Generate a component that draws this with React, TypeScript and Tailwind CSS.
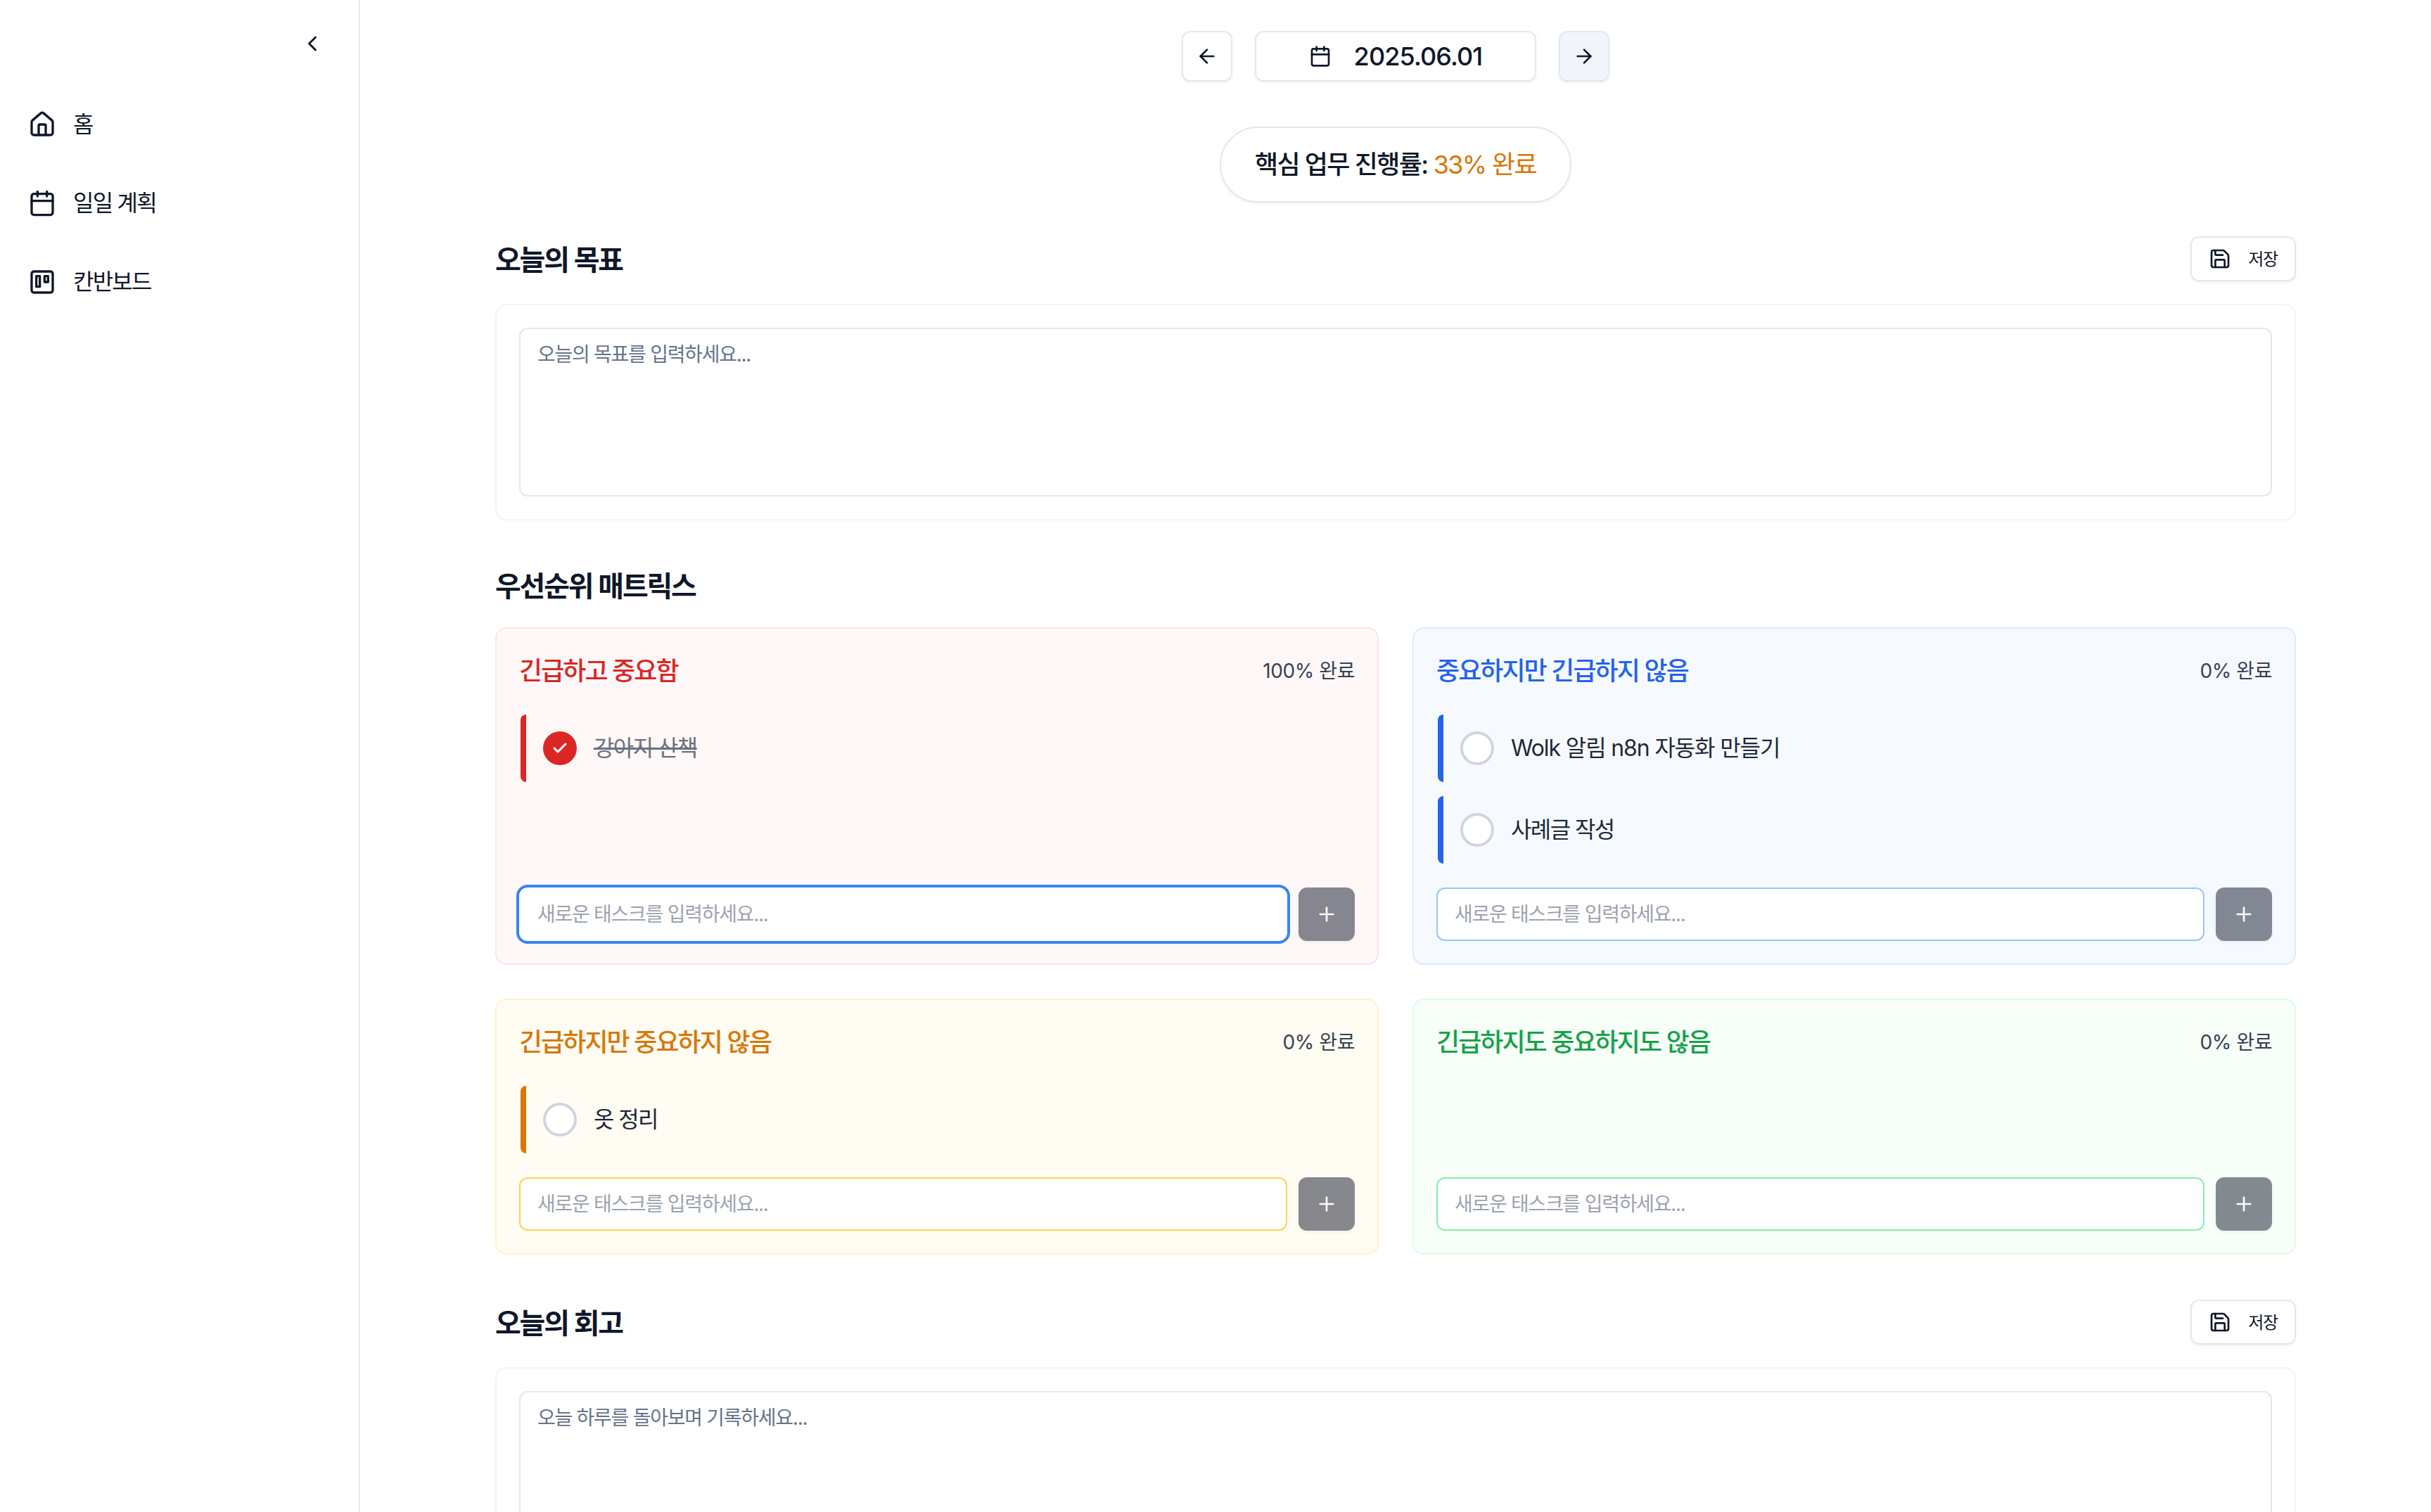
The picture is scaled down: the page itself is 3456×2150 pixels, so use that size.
import React from "react";
import { ArrowLeft, ArrowRight, Calendar, Check, ChevronLeft, House, Plus, Save } from "lucide-react";

function KanbanIcon({ className }: { className?: string }) {
  return (
    <svg viewBox="0 0 24 24" fill="none" stroke="currentColor" strokeWidth={2} strokeLinecap="round" strokeLinejoin="round" className={className}>
      <rect x="3" y="3" width="18" height="18" rx="2" />
      <rect x="7" y="7" width="3" height="9" />
      <rect x="14" y="7" width="3" height="5" />
    </svg>
  );
}

function SaveButton() {
  return (
    <button className="flex h-[64px] items-center gap-[24px] rounded-[12px] border-2 border-[#e2e8f0] bg-white px-[24px] text-[24px] tracking-[-0.05em] text-[#0f172a] shadow-[0_2px_4px_rgba(0,0,0,0.05)]">
      <Save className="h-[32px] w-[32px]" />
      <span className="pt-[2px]">저장</span>
    </button>
  );
}

function SectionHeader({ title, save }: { title: string; save?: boolean }) {
  return (
    <div className="mb-[32px] flex items-center justify-between">
      <h2 className="h-[56px] pt-[2px] text-[40px] leading-[56px] font-semibold tracking-[-0.055em] text-[#0f172a]">{title}</h2>
      {save && <SaveButton />}
    </div>
  );
}

function NoteCard({ placeholder }: { placeholder: string }) {
  return (
    <div className="rounded-[16px] border-2 border-[#f1f5f9] bg-white p-[32px] shadow-[0_2px_4px_rgba(0,0,0,0.02)]">
      <textarea
        placeholder={placeholder}
        className="block h-[240px] w-full resize-none rounded-[12px] border-2 border-[#e2e8f0] bg-white px-[24px] py-[16px] text-[28px] leading-[40px] tracking-[-0.045em] placeholder:text-[#64748b]"
      />
    </div>
  );
}

function Task({ label, done, barClass, circleClass, trackClass }: { label: string; done?: boolean; barClass: string; circleClass?: string; trackClass: string }) {
  return (
    <div className={`ml-[2px] flex h-[96px] items-center gap-[24px] rounded-l-[8px] border-l-[8px] pl-[24px] ${barClass}`}>
      {done ? (
        <span className={`flex h-[48px] w-[48px] items-center justify-center rounded-full ${circleClass}`}>
          <Check className="h-[24px] w-[24px] text-white" strokeWidth={3} />
        </span>
      ) : (
        <span className="h-[48px] w-[48px] rounded-full border-[4px] border-[#d1d5db] bg-white" />
      )}
      <span className={`text-[32px] ${trackClass} ${done ? "text-[#6b7280] line-through" : "text-[#1f2937]"}`}>{label}</span>
    </div>
  );
}

function Quadrant({
  title,
  percent,
  cardClass,
  titleClass,
  inputClass,
  children,
}: {
  title: string;
  percent: string;
  cardClass: string;
  titleClass: string;
  inputClass: string;
  children?: React.ReactNode;
}) {
  return (
    <div className={`flex flex-col rounded-[16px] border-2 p-[32px] ${cardClass}`}>
      <div className="mb-[34px] flex h-[56px] items-center justify-between">
        <h3 className={`text-[36px] font-medium tracking-[-0.055em] ${titleClass}`}>{title}</h3>
        <span className="text-[28px] tracking-[-0.015em] text-[#374151]">{percent}</span>
      </div>
      <div className="mb-[34px] flex flex-1 flex-col gap-[20px]">{children}</div>
      <div className="flex gap-[16px]">
        <input
          placeholder="새로운 태스크를 입력하세요..."
          className={`h-[76px] min-w-0 flex-1 rounded-[12px] bg-white px-[24px] text-[28px] tracking-[-0.045em] placeholder:text-[#9ca3af] ${inputClass}`}
        />
        <button className="flex h-[76px] w-[80px] items-center justify-center rounded-[12px] bg-[#0f172a] text-white opacity-50 shadow-[0_2px_4px_rgba(0,0,0,0.1)]">
          <Plus className="h-[32px] w-[32px]" />
        </button>
      </div>
    </div>
  );
}

export default function App() {
  return (
    <div className="flex h-screen overflow-hidden bg-white text-[#0f172a] [font-family:Inter,'Noto_Sans_CJK_KR',sans-serif]">
      <aside className="w-[512px] shrink-0 border-r-2 border-[#e2e8f0] bg-white">
        <div className="flex justify-end pt-[44px] pr-[48px]">
          <ChevronLeft className="h-[36px] w-[36px]" />
        </div>
        <nav className="mt-[53px] flex flex-col gap-[24px]">
          {[
            { label: "홈", Icon: House },
            { label: "일일 계획", Icon: Calendar },
            { label: "칸반보드", Icon: KanbanIcon },
          ].map(({ label, Icon }) => (
            <div key={label} className="flex h-[88px] items-center gap-[24px] px-[40px] text-[32px] tracking-[-0.055em]">
              <Icon className="h-[40px] w-[40px]" />
              <span>{label}</span>
            </div>
          ))}
        </nav>
      </aside>
      <main className="min-w-0 flex-1 px-[192px] pt-[44px]">
        <div className="mx-auto w-[2560px]">
          <div className="flex justify-center gap-[32px]">
            <button className="flex h-[72px] w-[72px] items-center justify-center rounded-[12px] border-2 border-[#e2e8f0] bg-white shadow-[0_2px_4px_rgba(0,0,0,0.05)]">
              <ArrowLeft className="h-[32px] w-[32px]" />
            </button>
            <div className="flex h-[72px] w-[400px] items-center justify-center gap-[32px] rounded-[12px] border-2 border-[#e2e8f0] bg-white text-[36px] font-medium tracking-[-0.025em] shadow-[0_2px_4px_rgba(0,0,0,0.05)]">
              <Calendar className="h-[32px] w-[32px]" />
              <span>2025.06.01</span>
            </div>
            <button className="flex h-[72px] w-[72px] items-center justify-center rounded-[12px] border-2 border-[#e2e8f0] bg-[#f1f5f9] shadow-[0_2px_4px_rgba(0,0,0,0.05)]">
              <ArrowRight className="h-[32px] w-[32px]" />
            </button>
          </div>
          <div className="mt-[64px] flex justify-center">
            <div className="rounded-full border-2 border-[#e5e7eb] bg-white px-[48px] py-[24px] text-[36px] leading-[56px] font-medium tracking-[-0.045em] shadow-[0_2px_4px_rgba(0,0,0,0.05)]">
              핵심 업무 진행률: <span className="font-normal text-[#d97706]">33% 완료</span>
            </div>
          </div>

          <section className="mt-[48px]">
            <SectionHeader title="오늘의 목표" save />
            <NoteCard placeholder="오늘의 목표를 입력하세요..." />
          </section>

          <section className="mt-[64px]">
            <SectionHeader title="우선순위 매트릭스" />
            <div className="grid grid-cols-2 gap-[48px]">
              <Quadrant
                title="긴급하고 중요함"
                percent="100% 완료"
                cardClass="border-[#fee2e2] bg-[#fef8f8]"
                titleClass="text-[#dc2626]"
                inputClass="border-2 border-transparent ring-[4px] ring-[#3b82f6]"
              >
                <Task label="강아지 산책" done barClass="border-[#dc2626]" circleClass="bg-[#dc2626]" trackClass="tracking-[-0.05em]" />
              </Quadrant>
              <Quadrant
                title="중요하지만 긴급하지 않음"
                percent="0% 완료"
                cardClass="border-[#dbeafe] bg-[#f6faff]"
                titleClass="text-[#2563eb]"
                inputClass="border-2 border-[#93c5fd]"
              >
                <Task label="Wolk 알림 n8n 자동화 만들기" barClass="border-[#2563eb]" trackClass="tracking-[-0.035em]" />
                <Task label="사례글 작성" barClass="border-[#2563eb]" trackClass="tracking-[-0.05em]" />
              </Quadrant>
              <Quadrant
                title="긴급하지만 중요하지 않음"
                percent="0% 완료"
                cardClass="border-[#fef3c7] bg-[#fffcf3]"
                titleClass="text-[#d97706]"
                inputClass="border-2 border-[#fcd34d]"
              >
                <Task label="옷 정리" barClass="border-[#d97706]" trackClass="tracking-[-0.05em]" />
              </Quadrant>
              <Quadrant
                title="긴급하지도 중요하지도 않음"
                percent="0% 완료"
                cardClass="border-[#dcfce7] bg-[#f7fff8]"
                titleClass="text-[#16a34a]"
                inputClass="border-2 border-[#86efac]"
              />
            </div>
          </section>

          <section className="mt-[64px]">
            <SectionHeader title="오늘의 회고" save />
            <NoteCard placeholder="오늘 하루를 돌아보며 기록하세요..." />
          </section>
        </div>
      </main>
    </div>
  );
}
